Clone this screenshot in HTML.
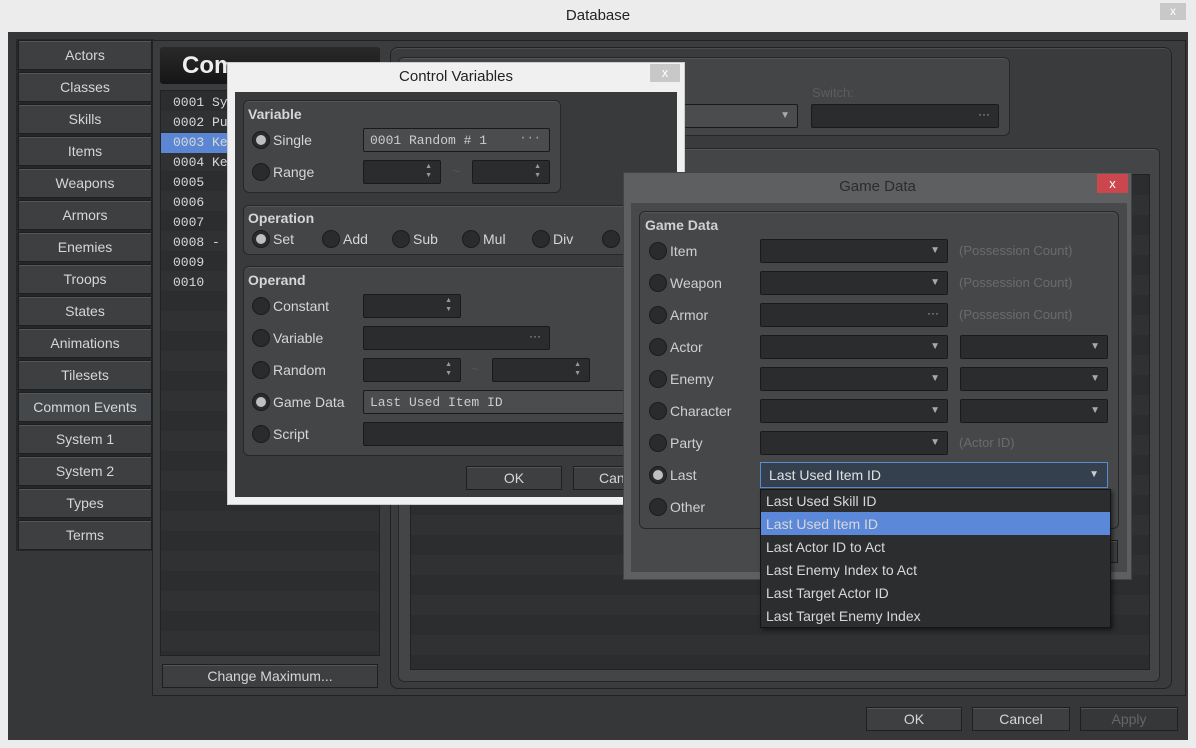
<!DOCTYPE html>
<html><head><meta charset="utf-8"><style>
*{box-sizing:border-box;margin:0;padding:0}
body{width:1196px;height:748px;background:#ececec;font-family:"Liberation Sans","DejaVu Sans",sans-serif;font-size:14px;color:#d8d8d8;position:relative;overflow:hidden}
.a{position:absolute}
.btn{position:absolute;background:#3d3f40;border:1px solid #1e1f20;color:#d6d6d6;text-align:center;box-shadow:inset 0 1px 0 #555}
.grp{position:absolute;border:1px solid #262728;border-radius:6px;background:#434546;box-shadow:inset 0 1px 0 #555}
.fld{position:absolute;background:#2b2c2d;border:1px solid #1a1a1a;border-radius:2px}
.lbl{position:absolute;font-size:14px;color:#d6d6d6}
.b{font-weight:bold}
.rad{position:absolute;width:18px;height:18px;border-radius:50%;background:#2a2b2c;border:1px solid #1c1c1c}
.rad.on::after{content:"";position:absolute;left:3px;top:3px;width:10px;height:10px;border-radius:50%;background:#bfbfbf}
.mono{font-family:"Liberation Mono","DejaVu Sans Mono",monospace;font-size:13px}
.arr{position:absolute;right:7px;top:5px;font-size:10px;color:#aaa}
.spin{position:absolute;right:8px;top:1px;font-size:7px;line-height:9px;color:#999}
.dots{position:absolute;right:8px;top:2px;font-size:12px;color:#aaa}
.gd .lbl{color:#d0d0d0}
.dim{position:absolute;color:#6b6b6b;font-size:14px}
</style></head><body>
<div class="a" style="left:0;top:0;width:1196px;height:32px;text-align:center;line-height:32px;color:#222;font-size:15px">Database</div>
<div class="a" style="left:1160px;top:3px;width:26px;height:17px;background:#c8c8c8;color:#fff;text-align:center;font-size:12px;line-height:17px">x</div>
<div class="a" style="left:8px;top:32px;width:1180px;height:708px;background:#363738"></div>
<div class="a" style="left:16px;top:39px;width:138px;height:512px;background:#262728"></div>
<div id="side"></div>
<div class="a" style="left:152px;top:40px;width:1034px;height:656px;background:#3b3c3d;border:1px solid #222"></div>
<div class="a" style="left:160px;top:47px;width:220px;height:37px;background:linear-gradient(#2a2a2a,#151515);border-radius:3px"></div>
<div class="a" style="left:160px;top:47px;width:67px;height:37px;overflow:hidden;white-space:nowrap;color:#eee;font-size:24px;font-weight:bold;line-height:37px;padding-left:22px">Common Events</div>
<div class="a" style="left:160px;top:90px;width:220px;height:566px;background:repeating-linear-gradient(#2c2d2e 0 20px,#303132 20px 40px);border:1px solid #222"></div>
<div class="a" style="left:161px;top:133px;width:218px;height:20px;background:#5a86d4"></div>
<div class="a mono" style="left:173px;top:93px;color:#d8d8d8;line-height:20px">0001 Sy<br>0002 Pu<br>0003 Ke<br>0004 Ke<br>0005<br>0006<br>0007<br>0008 -<br>0009<br>0010</div>
<div class="btn" style="left:162px;top:664px;width:216px;height:24px;line-height:22px">Change Maximum...</div>
<div class="a" style="left:390px;top:47px;width:782px;height:642px;border:1px solid #222;border-radius:8px;background:#3a3b3c;box-shadow:inset 0 1px 0 #4d4d4d"></div>
<div class="grp" style="left:398px;top:57px;width:612px;height:79px"></div>
<div class="lbl" style="left:812px;top:85px;color:#5c5d5e;font-size:13px">Switch:</div>
<div class="fld" style="left:600px;top:104px;width:198px;height:24px;background:#4a4c4d"><span class="arr">▼</span></div>
<div class="fld" style="left:811px;top:104px;width:188px;height:24px"><span class="dots">···</span></div>
<div class="grp" style="left:398px;top:148px;width:762px;height:534px"></div>
<div class="a" style="left:410px;top:174px;width:740px;height:496px;background:repeating-linear-gradient(#2c2d2e 0 20px,#303132 20px 40px);border:1px solid #222"></div>
<div class="btn" style="left:866px;top:707px;width:96px;height:24px;line-height:22px">OK</div>
<div class="btn" style="left:972px;top:707px;width:98px;height:24px;line-height:22px">Cancel</div>
<div class="btn" style="left:1080px;top:707px;width:98px;height:24px;line-height:22px;color:#666;background:#363738">Apply</div>

<div class="a" style="left:227px;top:62px;width:458px;height:443px;background:#f0f0f0;border:1px solid #ccc"></div>
<div class="a" style="left:227px;top:62px;width:458px;height:30px;text-align:center;line-height:30px;color:#222;font-size:15px">Control Variables</div>
<div class="a" style="left:650px;top:64px;width:30px;height:18px;background:#c8c8c8;color:#fff;text-align:center;line-height:18px;font-size:13px">x</div>
<div class="a" style="left:235px;top:92px;width:442px;height:405px;background:#393a3b"></div>
<div class="grp" style="left:243px;top:100px;width:318px;height:93px"></div>
<div class="lbl b" style="left:248px;top:106px">Variable</div>
<div class="rad on" style="left:252px;top:131px"></div><div class="lbl" style="left:273px;top:132px">Single</div>
<div class="fld mono" style="left:363px;top:128px;width:187px;height:24px;background:#4a4c4d;padding:4px 6px;color:#ccc">0001 Random # 1<span class="dots">···</span></div>
<div class="rad" style="left:252px;top:163px"></div><div class="lbl" style="left:273px;top:164px">Range</div>
<div class="fld" style="left:363px;top:160px;width:78px;height:24px"><span class="spin">▲<br>▼</span></div>
<div class="lbl" style="left:452px;top:163px;color:#555">~</div>
<div class="fld" style="left:472px;top:160px;width:78px;height:24px"><span class="spin">▲<br>▼</span></div>
<div class="grp" style="left:243px;top:205px;width:430px;height:50px"></div>
<div class="lbl b" style="left:248px;top:210px">Operation</div>
<div class="rad on" style="left:252px;top:230px"></div><div class="lbl" style="left:273px;top:231px">Set</div>
<div class="rad" style="left:322px;top:230px"></div><div class="lbl" style="left:343px;top:231px">Add</div>
<div class="rad" style="left:392px;top:230px"></div><div class="lbl" style="left:413px;top:231px">Sub</div>
<div class="rad" style="left:462px;top:230px"></div><div class="lbl" style="left:483px;top:231px">Mul</div>
<div class="rad" style="left:532px;top:230px"></div><div class="lbl" style="left:553px;top:231px">Div</div>
<div class="rad" style="left:602px;top:230px"></div>
<div class="grp" style="left:243px;top:266px;width:430px;height:190px"></div>
<div class="lbl b" style="left:248px;top:272px">Operand</div>
<div class="rad" style="left:252px;top:297px"></div><div class="lbl" style="left:273px;top:298px">Constant</div>
<div class="fld" style="left:363px;top:294px;width:98px;height:24px"><span class="spin">▲<br>▼</span></div>
<div class="rad" style="left:252px;top:329px"></div><div class="lbl" style="left:273px;top:330px">Variable</div>
<div class="fld" style="left:363px;top:326px;width:187px;height:24px"><span class="dots">···</span></div>
<div class="rad" style="left:252px;top:361px"></div><div class="lbl" style="left:273px;top:362px">Random</div>
<div class="fld" style="left:363px;top:358px;width:98px;height:24px"><span class="spin">▲<br>▼</span></div>
<div class="lbl" style="left:471px;top:361px;color:#555">~</div>
<div class="fld" style="left:492px;top:358px;width:98px;height:24px"><span class="spin">▲<br>▼</span></div>
<div class="rad on" style="left:252px;top:393px"></div><div class="lbl" style="left:273px;top:394px">Game Data</div>
<div class="fld mono" style="left:363px;top:390px;width:310px;height:24px;background:#4a4c4d;padding:4px 6px;color:#ccc">Last Used Item ID</div>
<div class="rad" style="left:252px;top:425px"></div><div class="lbl" style="left:273px;top:426px">Script</div>
<div class="fld" style="left:363px;top:422px;width:310px;height:24px"></div>
<div class="btn" style="left:466px;top:466px;width:96px;height:24px;line-height:22px">OK</div>
<div class="btn" style="left:573px;top:466px;width:104px;height:24px;line-height:22px;text-align:left;padding-left:25px">Can</div>

<div class="gd">
<div class="a" style="left:623px;top:172px;width:509px;height:408px;background:#5e5f60;border:1px solid #444"></div>
<div class="a" style="left:623px;top:172px;width:509px;height:30px;text-align:center;line-height:30px;color:#2c2c2c;font-size:15px">Game Data</div>
<div class="a" style="left:1097px;top:174px;width:31px;height:19px;background:#c9474d;color:#fff;text-align:center;line-height:19px;font-size:13px">x</div>
<div class="a" style="left:631px;top:203px;width:496px;height:369px;background:#48494a"></div>
<div class="grp" style="left:639px;top:211px;width:480px;height:318px;background:#464748"></div>
<div class="lbl b" style="left:645px;top:217px">Game Data</div>
<div id="gdrows"></div>
<div class="btn" style="left:1100px;top:540px;width:18px;height:23px"></div>
</div>
<div class="a" style="left:760px;top:462px;width:348px;height:26px;background:#34404e;border:1px solid #5b8bd0;color:#e0e0e0;padding:4px 8px;font-size:14px">Last Used Item ID<span class="arr" style="right:8px;top:6px;color:#ccc">▼</span></div>
<div class="a" style="left:760px;top:489px;width:351px;height:139px;background:#2c2d2e;border:1px solid #151515;box-shadow:2px 2px 4px rgba(0,0,0,.5)"></div>
<div class="a" style="left:761px;top:512px;width:349px;height:23px;background:#5b88d9"></div>
<div class="a" style="left:766px;top:490px;line-height:23px;font-size:14px;color:#d8d8d8">Last Used Skill ID<br>Last Used Item ID<br>Last Actor ID to Act<br>Last Enemy Index to Act<br>Last Target Actor ID<br>Last Target Enemy Index</div>
<script>
var s=["Actors","Classes","Skills","Items","Weapons","Armors","Enemies","Troops","States","Animations","Tilesets","Common Events","System 1","System 2","Types","Terms"],h="";
s.forEach(function(t,i){h+='<div class="btn" style="left:18px;top:'+(40+i*32)+'px;width:134px;height:30px;line-height:28px;font-size:14px;'+(i==11?'background:#45484a;':'')+'">'+t+'</div>'});
document.getElementById('side').innerHTML=h;
var r=[["Item","c","Possession Count"],["Weapon","c","Possession Count"],["Armor","d","Possession Count"],["Actor","c","2"],["Enemy","c","2"],["Character","c","2"],["Party","c","Actor ID"],["Last","",""],["Other","",""]],g="";
r.forEach(function(x,i){var y=251+i*32;
g+='<div class="rad'+(i==7?' on':'')+'" style="left:649px;top:'+(y-9)+'px"></div><div class="lbl" style="left:670px;top:'+(y-8)+'px">'+x[0]+'</div>';
if(x[1])g+='<div class="fld" style="left:760px;top:'+(y-12)+'px;width:188px;height:24px">'+(x[1]=='c'?'<span class="arr">▼</span>':'<span class="dots">···</span>')+'</div>';
if(x[2]=="2")g+='<div class="fld" style="left:960px;top:'+(y-12)+'px;width:148px;height:24px"><span class="arr">▼</span></div>';
else if(x[2])g+='<div class="dim" style="left:959px;top:'+(y-8)+'px;font-size:13px">('+x[2]+')</div>';});
document.getElementById('gdrows').innerHTML=g;
</script>
</body></html>
